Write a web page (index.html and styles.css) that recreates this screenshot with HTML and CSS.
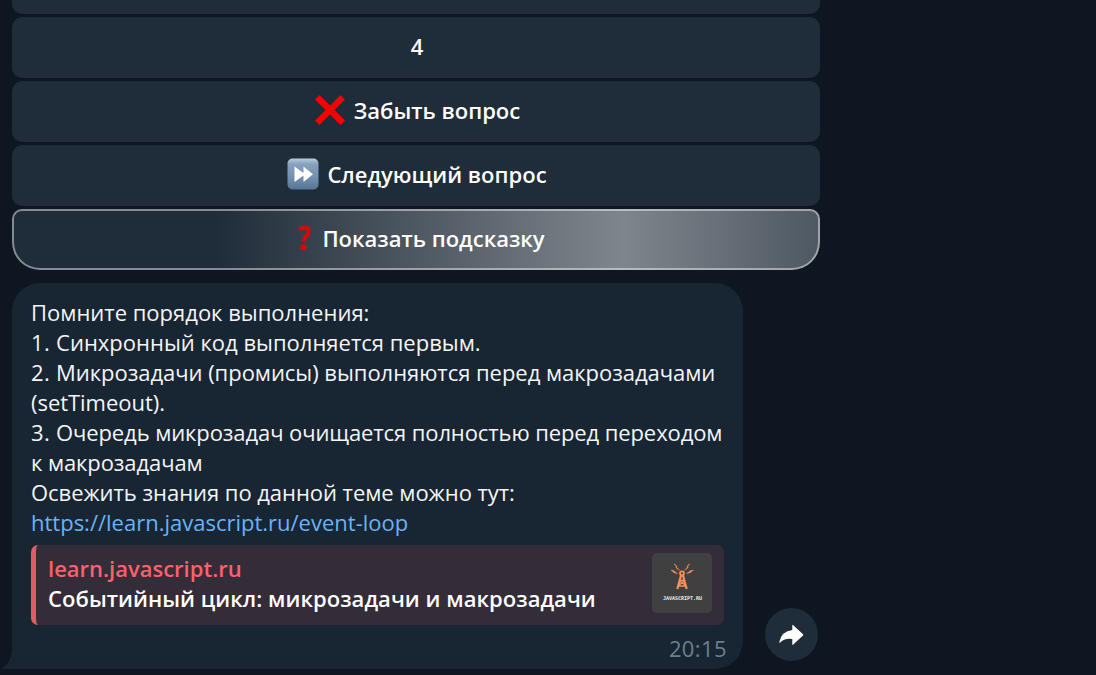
FILE: index.html
```html
<!DOCTYPE html>
<html lang="ru">
<head>
  <meta charset="UTF-8" />
  <meta name="viewport" content="width=device-width, initial-scale=1.0" />
  <title>Чат</title>
  <link rel="stylesheet" href="styles.css">
</head>
<body>
  <main class="chat">
    <div class="keyboard">
      <button class="key"></button>
      <button class="key"><span class="key-text">4</span></button>
      <button class="key">
        <svg class="emoji" viewBox="0 0 32 32">
          <path d="M1 5.500 5.500 1 16 11.500 26.500 1 31 5.500 20.500 16 31 26.500 26.500 31 16 20.500 5.500 31 1 26.500 11.500 16Z" fill="#f20500"/>
        </svg>
        <span class="key-text">Забыть вопрос</span>
      </button>
      <button class="key">
        <svg class="emoji" viewBox="0 0 32 32">
          <defs>
            <linearGradient id="tile" x1="0" y1="0" x2="0" y2="1">
              <stop offset="0" stop-color="#bccbdc"/>
              <stop offset="0.18" stop-color="#86a2bf"/>
              <stop offset="0.6" stop-color="#7291b0"/>
              <stop offset="1" stop-color="#587494"/>
            </linearGradient>
          </defs>
          <rect x="0.500" y="0.500" width="31" height="31" rx="5" fill="url(#tile)"/>
          <path d="M7.500 8.500 16.500 15v-6.500L26 16.200 16.500 24v-6.500L7.500 24Z" fill="#fff"/>
        </svg>
        <span class="key-text">Следующий вопрос</span>
      </button>
      <button class="key key-active">
        <svg class="emoji emoji-narrow" viewBox="0 0 28 32">
          <path d="M12.200 7.200Q22.500 2.800 21.500 10.500C21 14 16.800 14 16.600 19.500" fill="none" stroke="#e60000" stroke-width="3.800"/>
          <circle cx="16.500" cy="25.300" r="3" fill="#e60000"/>
        </svg>
        <span class="key-text">Показать подсказку</span>
      </button>
    </div>

    <div class="row">
      <div class="bubble">
        <p>Помните порядок выполнения:</p>
        <p><span class="num">1.</span> Синхронный код выполняется первым.</p>
        <p class="tight"><span class="num">2.</span> Микрозадачи (промисы) выполняются перед макрозадачами<br>(setTimeout).</p>
        <p class="tighter"><span class="num">3.</span> Очередь микрозадач очищается полностью перед переходом<br>к макрозадачам</p>
        <p class="tight">Освежить знания по данной теме можно тут:</p>
        <p><a class="link" href="#">https://learn.javascript.ru/event-loop</a></p>

        <div class="preview">
          <div class="preview-text">
            <div class="preview-site">learn.javascript.ru</div>
            <div class="preview-title">Событийный цикл: микрозадачи и макрозадачи</div>
          </div>
          <svg class="thumb" viewBox="0 0 60 60">
            <rect width="60" height="60" rx="5" fill="#404040"/>
            <g fill="none" stroke="#f98f5c">
              <circle cx="30" cy="20.300" r="2" stroke-width="1.700"/>
              <path d="M29 22.500 25.300 36M31 22.500 34.700 36" stroke-width="2.200"/>
              <path d="M28 27.500h4M27.500 28l5.500 4M32.500 28l-6 4.500M26.500 33h7" stroke-width="1.300"/>
            </g>
            <path d="M22.200 10.800l2.600 2.200-.2 1.200 3 3.200-3.600-2.600.2-1.200ZM37.800 10.800l-2.600 2.200.2 1.200-3 3.200 3.600-2.600-.2-1.200ZM19 17.300l3.200.5.700 1 2.700 1.600-3.700-.6-.8-1.100ZM41.500 17.300l-3.500.5-.7 1-2.700 1.600 3.700-.6.8-1.100Z" fill="#f98f5c" stroke="#f98f5c" stroke-width="0.500"/>
            <text class="thumb-text" x="30.500" y="46.500" textLength="39">JAVASCRIPT.RU</text>
          </svg>
        </div>

        <div class="time">20:15</div>
        <svg class="tail" viewBox="0 0 12 28">
          <path d="M12 0v28H2.500Q0 27.500 3 25.800Q10 21 11 10Z" fill="#182533"/>
        </svg>
      </div>

      <button class="share">
        <svg class="share-icon" viewBox="0 0 26 24">
          <path d="M13.300 2.300Q13.300 1.400 14 2L24 11.200Q24.600 11.900 24 12.500L14 21.700Q13.300 22.200 13.300 21.300V16Q6 14.600 1.200 19.400Q.2 20.200.3 19Q2.500 8.200 13.300 7Z" fill="#fff"/>
        </svg>
      </button>
    </div>
  </main>
</body>
</html>
```
FILE: styles.css
```css
* {
  margin: 0;
  padding: 0;
  box-sizing: border-box;
}

body {
  background: #0e1621;
  color: #f5f5f5;
  font-family: 'Open Sans', 'Noto Sans', sans-serif;
  font-size: 22px;
  line-height: 30px;
  height: 675px;
  overflow: hidden;
}

.chat {
  padding-left: 12px;
}

/* Inline keyboard */
.keyboard {
  width: 808px;
  display: flex;
  flex-direction: column;
  gap: 3px;
}

.key {
  height: 61px;
  display: flex;
  align-items: center;
  justify-content: center;
  gap: 8px;
  padding: 0 0 4px 2px;
  border: none;
  border-radius: 10px;
  background: #1f2c39;
  color: #fff;
  font: inherit;
  font-weight: 600;
}

.key:first-child {
  height: 14px;
  border-radius: 0 0 10px 10px;
}

.key-active {
  gap: 7px;
  padding-left: 0;
  border: 2px solid rgba(255, 255, 255, 0.45);
  border-radius: 10px 10px 28px 28px;
  background: linear-gradient(90deg, #1f2c39 25%, #7f858c 75.5%, #4e5862 100%) border-box;
}

.emoji {
  width: 32px;
  height: 32px;
}

.emoji-narrow {
  width: 28px;
}

/* Message */
.row {
  display: flex;
  align-items: flex-end;
  gap: 22px;
  margin-top: 13px;
}

.bubble {
  position: relative;
  width: 731px;
  height: 386px;
  padding: 14px 19px 0;
  border-radius: 28px 28px 28px 0;
  background: #182533;
}

.bubble p {
  white-space: nowrap;
}

.tight {
  letter-spacing: -0.04px;
}

.tighter {
  letter-spacing: -0.1px;
}

.num {
  letter-spacing: 0.5px;
}

.link {
  color: #6ab3f3;
  text-decoration: none;
}

.preview {
  display: flex;
  justify-content: space-between;
  height: 80px;
  margin-top: 8px;
  padding: 8px 12px 0;
  border-left: 5px solid #e35b64;
  border-radius: 7px;
  background: #342c38;
}

.preview-text {
  font-weight: 600;
  white-space: nowrap;
}

.preview-site {
  color: #fb6169;
}

.preview-title {
  color: #fff;
  letter-spacing: 0.04px;
}

.thumb {
  width: 60px;
  height: 60px;
}

.thumb-text {
  fill: #eee;
  font: bold 5px 'DejaVu Sans Mono', monospace;
  text-anchor: middle;
}

.time {
  margin: 8px -3px 0 0;
  color: #6d7f8f;
  letter-spacing: 0.4px;
  text-align: right;
}

.tail {
  position: absolute;
  left: -11px;
  bottom: 0;
  width: 12px;
  height: 28px;
}

.share {
  display: flex;
  align-items: center;
  justify-content: center;
  width: 53px;
  height: 53px;
  margin-bottom: 8px;
  border: none;
  border-radius: 50%;
  background: #1f2c39;
}

.share-icon {
  width: 26px;
  height: 24px;
}
```
